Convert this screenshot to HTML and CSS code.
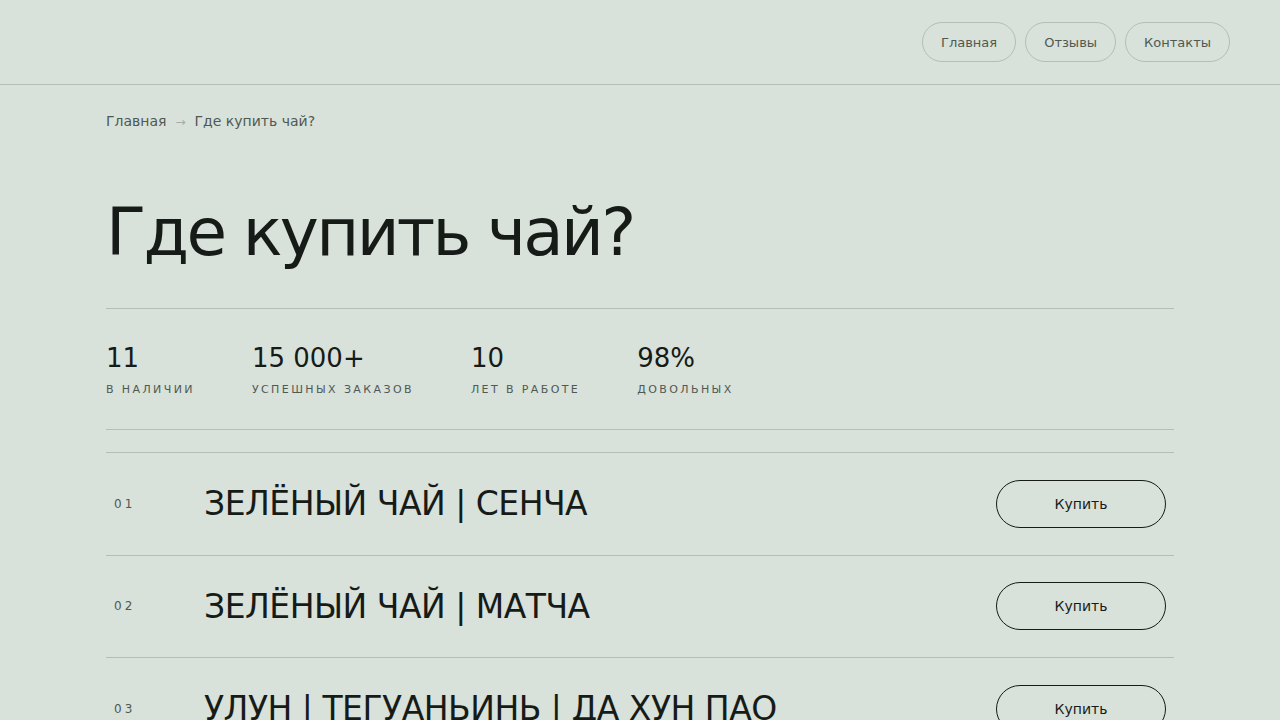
FILE: index.html
```html
<!DOCTYPE html>
<html lang="ru">
<head>
    <meta charset="UTF-8">
    <meta name="viewport" content="width=device-width, initial-scale=1.0">
    <title>Где купить чай?</title>
    <link rel="stylesheet" href="styles.css">
</head>
<body>
    <header class="topbar">
        <nav class="nav">
            <a class="nav-pill" href="#">Главная</a>
            <a class="nav-pill" href="#">Отзывы</a>
            <a class="nav-pill" href="#">Контакты</a>
        </nav>
    </header>

    <main class="page">
        <div class="crumbs">
            <a href="#">Главная</a>
            <span class="crumbs-arrow">&rarr;</span>
            <span>Где купить чай?</span>
        </div>

        <h1 class="title">Где купить чай?</h1>

        <section class="stats">
            <div class="stat">
                <div class="stat-num">11</div>
                <div class="stat-label">в наличии</div>
            </div>
            <div class="stat">
                <div class="stat-num">15 000+</div>
                <div class="stat-label">успешных заказов</div>
            </div>
            <div class="stat">
                <div class="stat-num">10</div>
                <div class="stat-label">лет в работе</div>
            </div>
            <div class="stat">
                <div class="stat-num">98%</div>
                <div class="stat-label">довольных</div>
            </div>
        </section>

        <ul class="list">
            <li class="item">
                <span class="item-no">01</span>
                <span class="item-name">ЗЕЛЁНЫЙ ЧАЙ | СЕНЧА</span>
                <a class="buy" href="#">Купить</a>
            </li>
            <li class="item">
                <span class="item-no">02</span>
                <span class="item-name">ЗЕЛЁНЫЙ ЧАЙ | МАТЧА</span>
                <a class="buy" href="#">Купить</a>
            </li>
            <li class="item">
                <span class="item-no">03</span>
                <span class="item-name">УЛУН | ТЕГУАНЬИНЬ | ДА ХУН ПАО</span>
                <a class="buy" href="#">Купить</a>
            </li>
        </ul>
    </main>
</body>
</html>
```

FILE: styles.css
```css
:root {
    --bg-color: #d8e1da;
    --text-color: #161b18;
    --muted-color: #4f5952;
    --line-color: #b4bdb6;
}

* {
    box-sizing: border-box;
}

body {
    font-family: 'DejaVu Sans', sans-serif;
    background-color: var(--bg-color);
    color: var(--text-color);
    margin: 0;
}

a {
    color: inherit;
    text-decoration: none;
}

.topbar {
    height: 85px;
    border-bottom: 1px solid var(--line-color);
    display: flex;
    justify-content: flex-end;
    align-items: center;
    padding: 0 50px 0 0;
}

.nav {
    display: flex;
    gap: 9px;
}

.nav-pill {
    height: 40px;
    padding: 0 18px;
    display: flex;
    align-items: center;
    border: 1px solid var(--line-color);
    border-radius: 20px;
    font-size: 13px;
    color: var(--muted-color);
}

.page {
    padding: 0 106px;
}

.crumbs {
    padding-top: 28px;
    font-size: 14px;
    color: var(--muted-color);
    display: flex;
    gap: 9px;
}

.crumbs-arrow {
    color: #a4ada6;
    font-size: 12px;
    padding-top: 2px;
}

.title {
    font-weight: 400;
    font-size: 66px;
    letter-spacing: -2.7px;
    margin: 71px 0 0;
    line-height: 1;
    padding-bottom: 42px;
    border-bottom: 1px solid var(--line-color);
}

.stats {
    display: flex;
    gap: 57px;
    padding: 33px 0 33px;
    border-bottom: 1px solid var(--line-color);
}

.stat-num {
    font-size: 26px;
    line-height: 32px;
}

.stat-label {
    margin-top: 9px;
    font-size: 11px;
    letter-spacing: 2.4px;
    text-transform: uppercase;
    color: var(--muted-color);
}

.list {
    list-style: none;
    margin: 22px 0 0;
    padding: 0;
    border-top: 1px solid var(--line-color);
}

.item {
    display: flex;
    align-items: center;
    height: 102.5px;
    border-bottom: 1px solid var(--line-color);
    padding: 0 8px;
}

.item-no {
    width: 90px;
    font-size: 12px;
    letter-spacing: 3px;
    color: var(--muted-color);
}

.item-name {
    flex: 1;
    font-size: 33px;
    letter-spacing: -0.5px;
}

.buy {
    width: 170px;
    height: 48px;
    border: 1px solid var(--text-color);
    border-radius: 24px;
    display: flex;
    justify-content: center;
    align-items: center;
    font-size: 14px;
}
```
